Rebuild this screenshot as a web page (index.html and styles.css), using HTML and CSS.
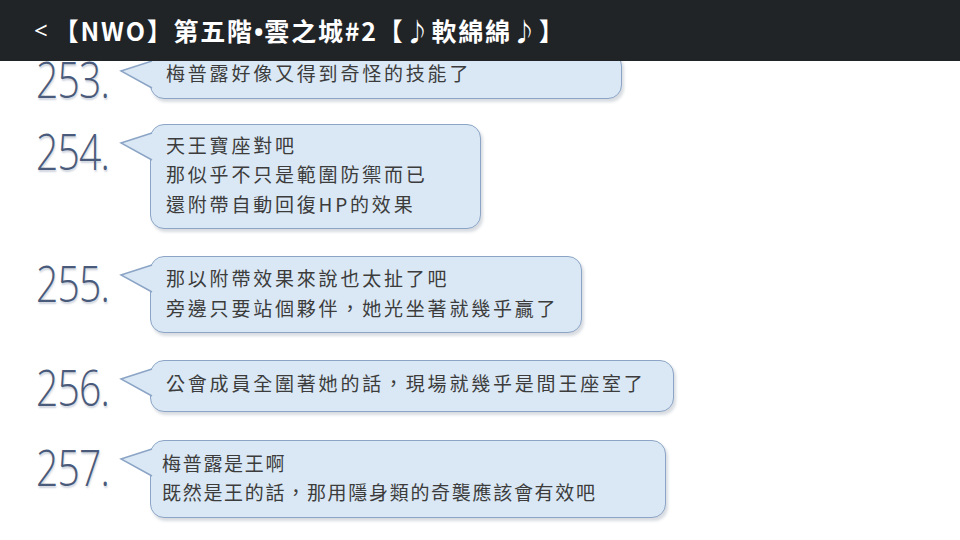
FILE: index.html
```html
<!DOCTYPE html>
<html lang="zh-Hant">

<head>
    <meta charset="UTF-8">
    <meta name="viewport" content="width=device-width, initial-scale=1.0">
    <title>【NWO】第五階•雲之城#2【♪軟綿綿♪】</title>
    <link rel="stylesheet" href="styles.css">
</head>

<body>
    <header class="topbar">
        <span class="back">&lt;</span>
        <h1 class="title">【NWO】第五階<span class="dot">•</span>雲之城#2【♪軟綿綿♪】</h1>
    </header>

    <main class="thread">
        <!-- 253 -->
        <div class="entry entry-253">
            <div class="num">253.</div>
            <div class="bubble">
                <svg class="tail" viewBox="0 0 34 30"><path d="M33 1 L2 11 L33 28" /></svg>
                <p>梅普露好像又得到奇怪的技能了</p>
            </div>
        </div>

        <!-- 254 -->
        <div class="entry entry-254">
            <div class="num">254.</div>
            <div class="bubble">
                <svg class="tail" viewBox="0 0 34 30"><path d="M33 1 L2 11 L33 28" /></svg>
                <p>天王寶座對吧</p>
                <p>那似乎不只是範圍防禦而已</p>
                <p>還附帶自動回復HP的效果</p>
            </div>
        </div>

        <!-- 255 -->
        <div class="entry entry-255">
            <div class="num">255.</div>
            <div class="bubble">
                <svg class="tail" viewBox="0 0 34 30"><path d="M33 1 L2 11 L33 28" /></svg>
                <p>那以附帶效果來說也太扯了吧</p>
                <p>旁邊只要站個夥伴，她光坐著就幾乎贏了</p>
            </div>
        </div>

        <!-- 256 -->
        <div class="entry entry-256">
            <div class="num">256.</div>
            <div class="bubble">
                <svg class="tail" viewBox="0 0 34 30"><path d="M33 1 L2 11 L33 28" /></svg>
                <p>公會成員全圍著她的話，現場就幾乎是間王座室了</p>
            </div>
        </div>

        <!-- 257 -->
        <div class="entry entry-257">
            <div class="num">257.</div>
            <div class="bubble tight">
                <svg class="tail" viewBox="0 0 34 30"><path d="M33 1 L2 11 L33 28" /></svg>
                <p>梅普露是王啊</p>
                <p>既然是王的話，那用隱身類的奇襲應該會有效吧</p>
            </div>
        </div>
    </main>
</body>

</html>
```

FILE: styles.css
```css
* {
    margin: 0;
    padding: 0;
    box-sizing: border-box;
}

body {
    font-family: 'Noto Sans CJK TC', 'Noto Sans', sans-serif;
    background-color: #ffffff;
    width: 960px;
    height: 540px;
    overflow: hidden;
}

/* top bar */
.topbar {
    height: 61px;
    background-color: #212427;
    color: #ffffff;
    display: flex;
    align-items: center;
    padding-left: 34px;
    position: relative;
    z-index: 2;
}

.back {
    font-family: 'Noto Sans', sans-serif;
    font-size: 24px;
    margin-right: 6px;
    margin-top: -2px;
}

.title {
    font-size: 25px;
    font-weight: bold;
    letter-spacing: 1.8px;
    line-height: 1;
}

.title .dot {
    font-family: 'Noto Sans', sans-serif;
    letter-spacing: 1px;
}

/* thread of posts */
.thread {
    height: 479px;
    overflow: hidden;
    display: flex;
    flex-direction: column;
    gap: 29px;
    padding-left: 36px;
}

.entry {
    display: flex;
    align-items: flex-start;
}

.num {
    width: 114px;
    height: 40px;
    font-family: 'Open Sans', sans-serif;
    font-weight: 300;
    font-size: 50px;
    line-height: 1;
    color: #4a5a7a;
    text-shadow: 1px 2px 2px rgba(60, 80, 120, 0.25);
    transform: scaleX(0.78);
    transform-origin: left top;
    margin-top: 2px;
    letter-spacing: -1px;
}

.bubble {
    position: relative;
    background-color: #dae8f5;
    border: 1.5px solid #8ca5c6;
    border-radius: 14px;
    box-shadow: 2px 3px 3px rgba(40, 60, 90, 0.18);
    padding: 5px 0 9px 15px;
    color: #3c3c3c;
    font-size: 19px;
    line-height: 29.5px;
    letter-spacing: 2.8px;
}

.bubble.tight {
    padding-left: 11px;
    letter-spacing: 1.7px;
}

.tail {
    position: absolute;
    left: -32px;
    top: 7px;
    width: 34px;
    height: 30px;
    overflow: visible;
}

.tail path {
    fill: #dae8f5;
    stroke: #8ca5c6;
    stroke-width: 1.5;
}

.entry-253 { margin-top: -9px; }
.entry-254 { margin-top: -4px; }
.entry-255 { margin-top: -2.5px; }
.entry-256 { margin-top: -2px; }
.entry-257 { margin-top: -1px; }

.entry-253 .bubble { width: 472px; padding-bottom: 10px; }
.entry-254 .bubble { width: 331px; padding-top: 5px; padding-bottom: 10px; }
.entry-255 .bubble { width: 432px; padding-top: 6.5px; padding-bottom: 10px; }
.entry-256 .bubble { width: 524px; padding-top: 7px; padding-bottom: 13px; }
.entry-257 .bubble { width: 516px; padding-top: 7px; padding-bottom: 10px; }
```
